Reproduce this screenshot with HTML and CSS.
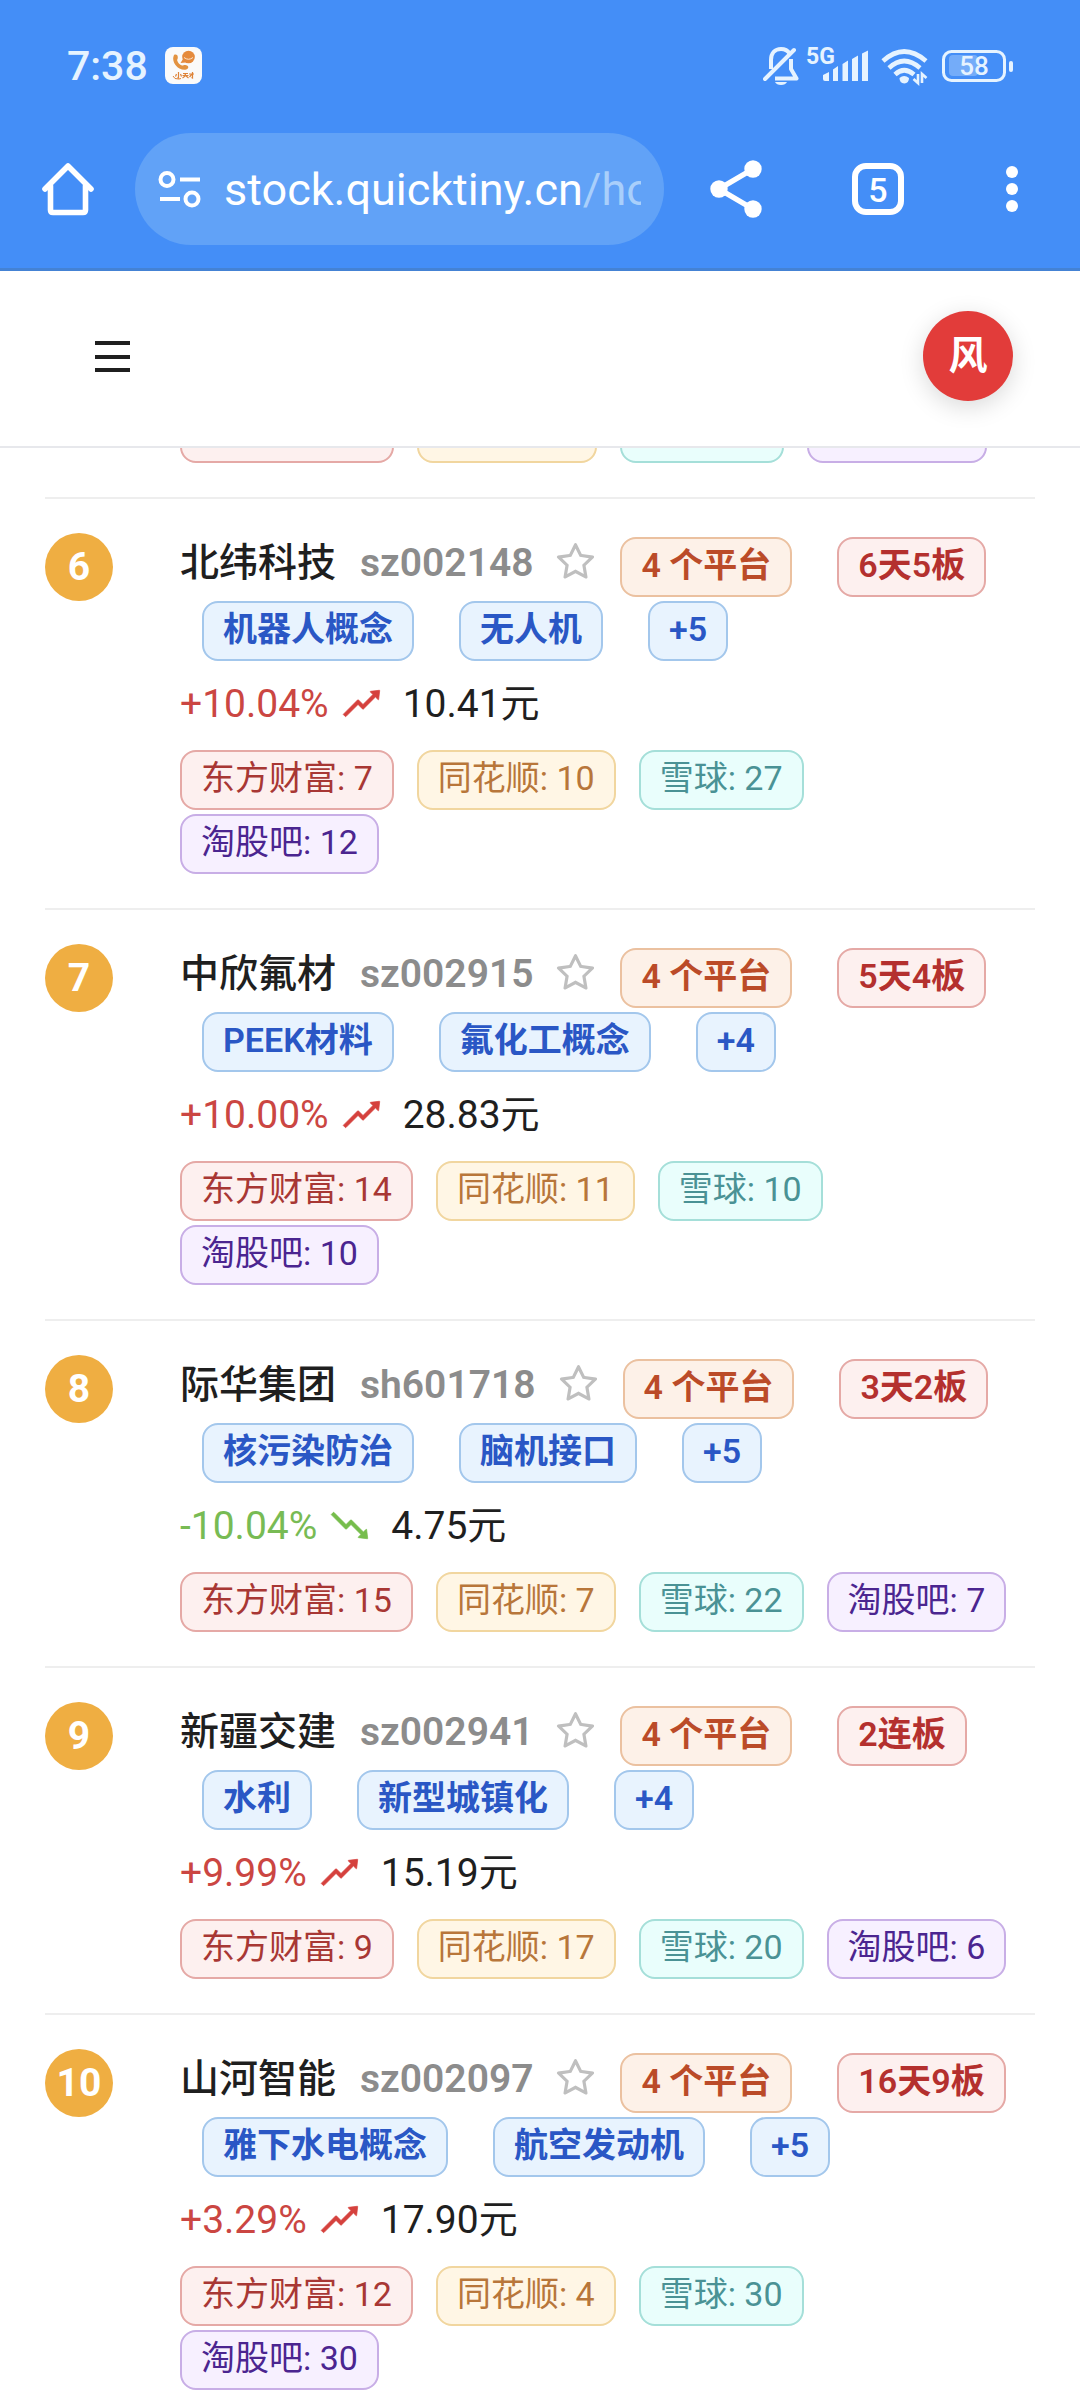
FILE: index.html
```html
<!DOCTYPE html>
<html lang="zh-CN">
<head>
<meta charset="utf-8">
<meta name="viewport" content="width=device-width, initial-scale=1">
<title>热门股票</title>
<link rel="stylesheet" href="styles.css">
</head>
<body>
<svg class="sprite" aria-hidden="true">
  <symbol id="star" viewBox="0 0 1024 1024"><path d="M908.1 353.1l-253.9-36.9L540.7 86.1c-3.1-6.3-8.2-11.4-14.5-14.5-15.8-7.8-35-1.3-42.9 14.5L369.8 316.2l-253.9 36.9c-7 1-13.4 4.3-18.3 9.3a32.05 32.05 0 00.6 45.3l183.7 179.1-43.4 252.9a31.95 31.95 0 0046.4 33.7L512 754l227.1 119.4c6.2 3.3 13.4 4.4 20.3 3.2 17.4-3 29.1-19.5 26.1-36.9l-43.4-252.9 183.7-179.1c5-4.9 8.3-11.3 9.3-18.3 2.7-17.5-9.5-33.7-27-36.3zM664.8 561.6l36.1 210.3L512 672.7 323.1 772l36.1-210.3-152.8-149L417.6 382 512 190.7 606.4 382l211.2 30.7-152.8 148.9z"/></symbol>
  <symbol id="rise" viewBox="0 0 1024 1024"><path d="M917 211.1l-199.2 24c-6.6.8-9.4 8.9-4.7 13.6l59.3 59.3-226 226-101.8-101.7c-6.3-6.3-16.4-6.2-22.6 0L100.3 754.1a8.03 8.03 0 000 11.3l45 45.2c3.1 3.1 8.2 3.1 11.3 0L433.3 534 535 635.7c6.3 6.2 16.4 6.2 22.6 0L829 364.5l59.3 59.3a8.01 8.01 0 0013.6-4.7l24-199.2c.7-5.1-3.7-9.5-8.9-8.8z"/></symbol>
  <symbol id="fall" viewBox="0 0 1024 1024"><path d="M925.9 804l-24-199.2c-.8-6.6-8.9-9.4-13.6-4.7L829 659.5 557.7 388.3c-6.3-6.2-16.4-6.2-22.6 0L433.3 490 156.6 213.3a8.03 8.03 0 00-11.3 0l-45 45.2a8.03 8.03 0 000 11.3L422 591.7c6.2 6.3 16.4 6.3 22.6 0L546.4 490l226.1 226-59.3 59.3a8.01 8.01 0 004.7 13.6l199.2 24c5.1.7 9.5-3.7 8.8-8.9z"/></symbol>
</svg>
<div class="app">
  <div class="browser">
    <div class="status">
      <span class="clock">7:38</span>
      <svg class="notice" viewBox="0 0 37 37" aria-hidden="true">
        <rect width="37" height="37" rx="8" fill="#fafafa"/>
        <circle cx="23.500" cy="10" r="6.300" fill="#e58a3c"/>
        <path d="M18 12l-2.500 4 5-.5z" fill="#e58a3c"/>
        <path d="M19 10.500q4.500 3.500 9 0" fill="none" stroke="#fbe3cc" stroke-width="1"/>
        <path d="M9 8c2-1.200 4 0 3.800 2.500 0 1.500-.8 2-.6 3 .8 2.500 2.500 4.300 4.800 5 1.200.2 2-.8 3.500-.5 2.500.4 3.500 2 2.300 3.500-1.600 1.800-5 1.800-8.300 0C10 19 6.500 13 9 8z" fill="#e39341"/>
        <path d="M13.500 25v6l-1-.6M11.500 27l-1 2.500M15.500 27l1 2.500M18 26.500h5M17.500 28.500h6M20.500 26.500q0 3-3 4.500M20.500 28.500l3 2.500M24 27h5M27.500 25v6l-1-.6M27 27l-2.500 3" fill="none" stroke="#de8338" stroke-width="1.200"/>
        <path d="M8 29q1 3.500 6 3l2-.5" fill="none" stroke="#de8338" stroke-width="1"/>
      </svg>
      <div class="status-icons">
        <svg width="36" height="40" viewBox="0 0 36 40" aria-hidden="true" fill="none" stroke="#e6f3ff" stroke-width="4">
          <path d="M8 23V14C8 7 12 3 18 3c4 0 7 2 8.500 4.500"/>
          <path d="M2 33L31 4" stroke-linecap="round"/>
          <path d="M28 13v10l5.500 9.500H12" stroke-linejoin="round"/>
          <path d="M12 36h12q-1.500 3-6 3t-6-3z" fill="#e6f3ff" stroke="none"/>
        </svg>
        <svg class="signal" width="62" height="40" viewBox="0 0 62 40" aria-hidden="true" fill="#e6f3ff">
          <text class="net" x="0" y="18">5G</text>
          <path d="M17 29l6-3v9h-4q-2 0-2-2zM27 23.500l5-3.500V35h-5zM36.500 18l5.500-3.500V35h-5.500zM46 13l6-3.500V35h-6zM56 7.500l6-3V35h-6z"/>
        </svg>
        <svg width="53" height="40" viewBox="-6 0 53 40" aria-hidden="true" fill="none" stroke="#e6f3ff" stroke-width="4.600">
          <path d="M2 15Q23 -4 45 15"/><path d="M8 22Q23 8 39 22"/><path d="M14 28.500Q23 20 33 28.500"/>
          <path d="M18.500 32q4.500-4 9.500 0 0 5-4.700 5.500-4.800-.5-4.800-5.500z" fill="#e6f3ff" stroke="none"/>
          <path d="M37 28v9l-4.500-4M41 37v-9l4.500 4" stroke-width="2.600"/>
        </svg>
        <svg width="78" height="40" viewBox="-7 0 78 40" aria-hidden="true">
          <rect x="7" y="9" width="29" height="21" rx="4" fill="#74acf9"/>
          <rect x="1.500" y="5.500" width="61" height="29" rx="8" fill="none" stroke="#e6f3ff" stroke-width="3"/>
          <rect x="67" y="15" width="4" height="11" rx="2" fill="#e6f3ff"/>
          <text class="battery" x="32" y="29" text-anchor="middle">58</text>
        </svg>
      </div>
    </div>
    <div class="toolbar">
      <button class="tool" aria-label="主页">
        <svg width="54" height="54" viewBox="0 0 54 54" fill="none" stroke="#fff" stroke-width="5.600" stroke-linejoin="round" stroke-linecap="round"><path d="M4 27L27 4l23 23"/><path d="M9.500 24v24q0 2.500 2.500 2.500h30q2.500 0 2.500-2.500V24"/></svg>
      </button>
      <button class="address">
        <svg width="43" height="38" viewBox="0 0 43 38" fill="none" stroke="#fff" stroke-width="4"><circle cx="9" cy="9.500" r="6.500"/><circle cx="34" cy="29" r="6.500"/><path d="M22 9.500h20M2 29h20"/></svg>
        <span class="url">stock.quicktiny.cn<span class="path">/ho</span></span>
      </button>
      <button class="tool" aria-label="分享">
        <svg width="54" height="60" viewBox="0 0 54 60" fill="#fff"><path d="M44 10L10 30l34 20" fill="none" stroke="#fff" stroke-width="5.500"/><circle cx="10" cy="30" r="8.700"/><circle cx="44" cy="10" r="8.700"/><circle cx="44" cy="50" r="8.700"/></svg>
      </button>
      <button class="tool" aria-label="标签页"><span class="tabs">5</span></button>
      <button class="tool" aria-label="更多">
        <svg width="14" height="48" viewBox="0 0 14 48" fill="#fff"><circle cx="7" cy="7" r="6"/><circle cx="7" cy="24" r="6"/><circle cx="7" cy="41" r="6"/></svg>
      </button>
    </div>
  </div>

  <header class="header">
    <button class="menu" aria-label="菜单">
      <svg width="35" height="31" viewBox="0 0 35 31" fill="#1f1f1f"><path d="M0 0h35v4H0zM0 14h35v4H0zM0 27h35v4H0z"/></svg>
    </button>
    <button class="avatar">风</button>
  </header>

  <main class="content">
    <ol class="stocks">
      <li class="stock partial">
        <div class="tags body">
          <span class="tag red">东方财富: 8</span><span class="tag gold">同花顺: 6</span><span class="tag teal">雪球: 12</span><span class="tag purple">淘股吧: 8</span>
        </div>
      </li>
      <li class="stock">
        <span class="rank">6</span>
        <div class="body">
          <div class="title">
            <span class="name">北纬科技</span><span class="code">sz002148</span>
            <button class="star" aria-label="收藏"><svg width="45" height="45"><use href="#star"/></svg></button>
            <span class="tag orange">4 个平台</span><span class="tag red">6天5板</span><span class="tag blue">机器人概念</span><span class="tag blue">无人机</span><span class="tag blue">+5</span>
          </div>
          <div class="quote"><span class="up">+10.04%</span><svg class="trend" width="45" height="45" aria-hidden="true"><use href="#rise"/></svg><span>10.41元</span></div>
          <div class="tags"><span class="tag red">东方财富: 7</span><span class="tag gold">同花顺: 10</span><span class="tag teal">雪球: 27</span><span class="tag purple">淘股吧: 12</span></div>
        </div>
      </li>
      <li class="stock">
        <span class="rank">7</span>
        <div class="body">
          <div class="title">
            <span class="name">中欣氟材</span><span class="code">sz002915</span>
            <button class="star" aria-label="收藏"><svg width="45" height="45"><use href="#star"/></svg></button>
            <span class="tag orange">4 个平台</span><span class="tag red">5天4板</span><span class="tag blue">PEEK材料</span><span class="tag blue">氟化工概念</span><span class="tag blue">+4</span>
          </div>
          <div class="quote"><span class="up">+10.00%</span><svg class="trend" width="45" height="45" aria-hidden="true"><use href="#rise"/></svg><span>28.83元</span></div>
          <div class="tags"><span class="tag red">东方财富: 14</span><span class="tag gold">同花顺: 11</span><span class="tag teal">雪球: 10</span><span class="tag purple">淘股吧: 10</span></div>
        </div>
      </li>
      <li class="stock">
        <span class="rank">8</span>
        <div class="body">
          <div class="title">
            <span class="name">际华集团</span><span class="code">sh601718</span>
            <button class="star" aria-label="收藏"><svg width="45" height="45"><use href="#star"/></svg></button>
            <span class="tag orange">4 个平台</span><span class="tag red">3天2板</span><span class="tag blue">核污染防治</span><span class="tag blue">脑机接口</span><span class="tag blue">+5</span>
          </div>
          <div class="quote"><span class="down">-10.04%</span><svg class="trend falling" width="45" height="45" aria-hidden="true"><use href="#fall"/></svg><span>4.75元</span></div>
          <div class="tags"><span class="tag red">东方财富: 15</span><span class="tag gold">同花顺: 7</span><span class="tag teal">雪球: 22</span><span class="tag purple">淘股吧: 7</span></div>
        </div>
      </li>
      <li class="stock">
        <span class="rank">9</span>
        <div class="body">
          <div class="title">
            <span class="name">新疆交建</span><span class="code">sz002941</span>
            <button class="star" aria-label="收藏"><svg width="45" height="45"><use href="#star"/></svg></button>
            <span class="tag orange">4 个平台</span><span class="tag red">2连板</span><span class="tag blue">水利</span><span class="tag blue">新型城镇化</span><span class="tag blue">+4</span>
          </div>
          <div class="quote"><span class="up">+9.99%</span><svg class="trend" width="45" height="45" aria-hidden="true"><use href="#rise"/></svg><span>15.19元</span></div>
          <div class="tags"><span class="tag red">东方财富: 9</span><span class="tag gold">同花顺: 17</span><span class="tag teal">雪球: 20</span><span class="tag purple">淘股吧: 6</span></div>
        </div>
      </li>
      <li class="stock">
        <span class="rank">10</span>
        <div class="body">
          <div class="title">
            <span class="name">山河智能</span><span class="code">sz002097</span>
            <button class="star" aria-label="收藏"><svg width="45" height="45"><use href="#star"/></svg></button>
            <span class="tag orange">4 个平台</span><span class="tag red">16天9板</span><span class="tag blue">雅下水电概念</span><span class="tag blue">航空发动机</span><span class="tag blue">+5</span>
          </div>
          <div class="quote"><span class="up">+3.29%</span><svg class="trend" width="45" height="45" aria-hidden="true"><use href="#rise"/></svg><span>17.90元</span></div>
          <div class="tags"><span class="tag red">东方财富: 12</span><span class="tag gold">同花顺: 4</span><span class="tag teal">雪球: 30</span><span class="tag purple">淘股吧: 30</span></div>
        </div>
      </li>
    </ol>
  </main>
</div>
</body>
</html>
```
FILE: styles.css
```css
* { box-sizing: border-box; }

body {
  margin: 0;
  background: #fff;
  color: #1f1f1f;
  font-family: Roboto, "Noto Sans CJK SC", sans-serif;
  font-size: 39px;
}

button {
  margin: 0;
  padding: 0;
  border: 0;
  background: none;
  color: inherit;
  font: inherit;
}

svg { display: block; }

.sprite { display: none; }

.app {
  display: flex;
  flex-direction: column;
  height: 100vh;
  overflow: hidden;
}

/* Browser chrome */
.browser {
  position: relative;
  z-index: 2;
  flex: none;
  background: #448ef7;
  border-bottom: 3px solid #4482d4;
}

.status {
  display: flex;
  align-items: center;
  height: 133px;
  padding: 0 67px 2px;
}

.clock {
  color: #e6f3ff;
  font-size: 41px;
  font-weight: 500;
}

.notice {
  width: 37px;
  height: 37px;
  margin-left: 17px;
}

.status-icons {
  display: flex;
  gap: 7px;
  margin-left: auto;
}

.signal { overflow: visible; }

.net { font-size: 23px; font-weight: 700; }

.battery {
  fill: #e6f3ff;
  font-size: 26px;
  font-weight: 500;
}

.toolbar {
  display: grid;
  grid-template-columns: 135px 1fr 144px 140px 128px;
  padding: 0 4px 23px 0;
}

.tool {
  display: flex;
  align-items: center;
  justify-content: center;
}

.address {
  display: flex;
  align-items: center;
  gap: 23px;
  min-width: 0;
  height: 112px;
  padding: 0 23px;
  border-radius: 56px;
  background: #61a2f7;
  color: #fff;
  font-size: 45px;
  text-align: left;
}

.address svg { flex: none; }

.url {
  flex: 1;
  overflow: hidden;
  white-space: nowrap;
}

.path { color: #a9cffb; }

.tabs {
  width: 52px;
  height: 52px;
  border: 6px solid #fff;
  border-radius: 14px;
  color: #fff;
  font-size: 34px;
  font-weight: 500;
  line-height: 42px;
}

/* Page header */
.header {
  position: relative;
  z-index: 1;
  flex: none;
  display: flex;
  align-items: center;
  justify-content: space-between;
  height: 177px;
  padding: 0 67px 5px 95px;
  border-bottom: 2px solid #e7e8ec;
  background: #fff;
}

.avatar {
  width: 90px;
  height: 90px;
  border-radius: 50%;
  background: #e23c3a;
  box-shadow: 0 6px 24px rgba(0, 0, 0, 0.15);
  color: #fff;
  font-weight: 700;
  line-height: 86px;
}

/* Stock ranking; the list is scrolled under the header */
.content {
  flex: 1;
  min-height: 0;
  padding: 0 45px;
}

.stocks {
  margin: -49px 0 0;
  padding: 0;
  list-style: none;
}

.stock {
  display: grid;
  grid-template-columns: 68px 1fr;
  column-gap: 67px;
  padding: 34px 0;
  border-bottom: 2px solid #eee;
}

.body { grid-column: 2; }

.partial { padding-top: 0; }

.rank {
  height: 68px;
  border-radius: 50%;
  background: #efae42;
  color: #fff;
  font-weight: 700;
  line-height: 68px;
  text-align: center;
}

.title,
.tags {
  display: flex;
  flex-wrap: wrap;
  align-items: flex-start;
}

.name,
.code {
  height: 60px;
  line-height: 60px;
}

.name {
  margin-right: 24px;
  font-weight: 500;
}

.code {
  color: #8c8c8c;
  font-weight: 600;
}

.star {
  margin: 7px 0 0 20px;
  fill: #bfbfbf;
}

.tag {
  height: 60px;
  margin: 4px 23px 0 0;
  padding: 0 19px;
  border: 2px solid;
  border-radius: 16px;
  font-size: 34px;
  line-height: 52px;
  white-space: nowrap;
}

.title .tag {
  margin-left: 22px;
  font-weight: 600;
}

.red { border-color: #e5a9a6; background: #fdf0ef; color: #a83734; }
.title .red { color: #b4302e; }
.orange { border-color: #ebc1a0; background: #fdf1e8; color: #bb4b28; }
.blue { border-color: #a3c7ec; background: #e8f3fe; color: #2a57c5; }
.gold { border-color: #f1d69f; background: #fff6e5; color: #b8763a; }
.teal { border-color: #a5dfd9; background: #e9fefc; color: #4a9295; }
.purple { border-color: #c8aee6; background: #f7f0ff; color: #4b2590; }

.quote {
  display: flex;
  align-items: center;
  height: 85px;
  line-height: 84px;
}

.up { color: #cb4642; }
.down { color: #78bb54; }

.trend {
  margin: 0 19px 0 10px;
  fill: #d5413d;
  stroke: #d5413d;
  stroke-width: 16px;
}

.falling {
  fill: #76bd4c;
  stroke: #76bd4c;
}
```
